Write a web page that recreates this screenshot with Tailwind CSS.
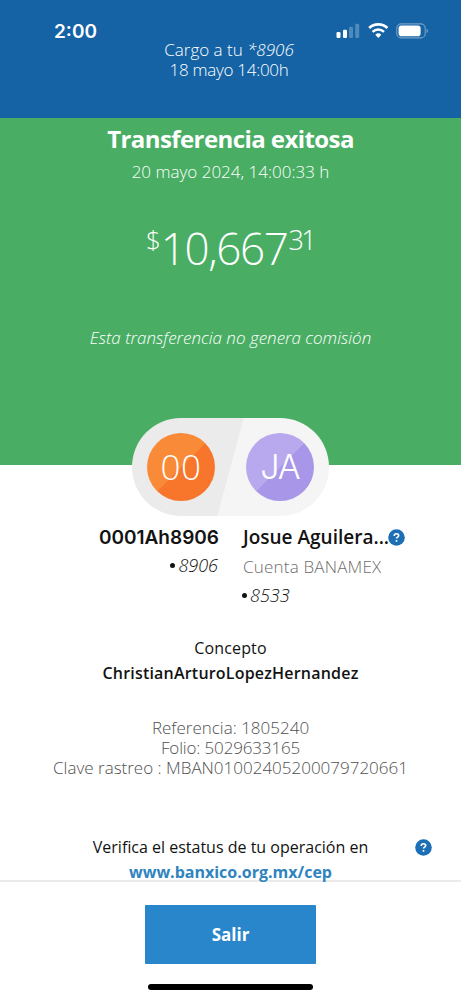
<!DOCTYPE html>
<html lang="es">
<head>
<meta charset="utf-8">
<meta name="viewport" content="width=device-width, initial-scale=1">
<title>Transferencia exitosa</title>
<script src="https://cdn.jsdelivr.net/npm/@tailwindcss/browser@4"></script>
</head>
<body class="bg-white">
<div class="flex h-[1000px] w-[461px] flex-col overflow-hidden bg-white font-['Open_Sans',sans-serif] text-[17px] leading-5 text-[#121212]">

  <!-- Status bar and charge notice -->
  <header class="h-[118px] shrink-0 bg-[#1563a5] text-white">
    <div class="flex h-[40px] items-start justify-between pr-[31px] pl-[54px] pt-[22px]">
      <span class="font-['Inter',sans-serif] text-[19px] leading-[19px] font-semibold">2:00</span>
      <svg class="h-[18px] w-[94px]" viewBox="0 0 94 18" fill="none">
        <g fill="#fff">
          <rect x="0.5" y="10" width="4" height="6" rx="1.2"/>
          <rect x="7" y="7.8" width="4" height="8.2" rx="1.2"/>
          <g fill-opacity=".25">
            <rect x="13" y="4.8" width="4" height="11.2" rx="1.2"/>
            <rect x="19.2" y="1.8" width="4" height="14.2" rx="1.2"/>
          </g>
        </g>
        <path d="M33.2 6a13 13 0 0 1 18.2 0" stroke="#fff" stroke-width="2.7"/>
        <path d="M36.6 9.8a8.2 8.2 0 0 1 11.4 0" stroke="#fff" stroke-width="2.5"/>
        <path d="M39.3 12.7a4.4 4.4 0 0 1 6 0l-3 3.2z" fill="#fff"/>
        <rect x="60.8" y="1.9" width="28.4" height="14" rx="4.4" stroke="#fff" stroke-opacity=".4" stroke-width="1.1"/>
        <rect x="62.6" y="3.6" width="22" height="10.6" rx="2.8" fill="#fff"/>
        <path d="M90.6 6.7c1.7.5 1.7 3.9 0 4.4z" fill="#fff" fill-opacity=".45"/>
      </svg>
    </div>
    <p class="pr-[3px] text-center font-light">Cargo a tu <i>*8906</i></p>
    <p class="pr-[3px] text-center font-light tracking-[-0.28px]">18 mayo 14:00h</p>
  </header>

  <!-- Result and amount -->
  <section class="flex h-[347px] shrink-0 flex-col items-center bg-[#49ae64] text-center text-white">
    <h1 class="mt-[5px] text-[24px] leading-[32px] font-bold tracking-[-0.58px]">Transferencia exitosa</h1>
    <p class="mt-[7px] font-light">20 mayo 2024, 14:00:33 h</p>
    <div class="mt-[42px] flex items-start pr-px font-light">
      <span class="pt-px text-[26px] leading-[28px]">$</span>
      <span class="text-[44px] leading-[48px] tracking-[-1.4px]">10,667</span>
      <span class="pl-px pt-[2px] text-[27px] leading-[28px] tracking-[-2.6px]">31</span>
    </div>
    <p class="mt-[56px] font-light italic">Esta transferencia no genera comisión</p>
    <!-- Sender and recipient avatars -->
    <div class="mt-[70px] flex h-[98px] w-[197px] shrink-0 items-center justify-between rounded-full bg-[linear-gradient(105deg,#ebebeb_49.8%,#f5f5f5_50.2%)] px-[15px] font-light">
      <span class="flex size-[68px] items-center justify-center rounded-full bg-[linear-gradient(135deg,#f98b38_50%,#f7762c_50.5%)] text-[35px] tracking-[0.5px]">00</span>
      <span class="flex size-[68px] items-center justify-center rounded-full bg-[linear-gradient(135deg,#b8a9ee_50%,#a896e9_50.5%)] font-['Inter',sans-serif] text-[34px] tracking-[-1px]">JA</span>
    </div>
  </section>

  <!-- Accounts -->
  <section class="flex h-[172px] shrink-0 gap-[24px] pt-[61px]">
    <div class="w-[219px] text-right">
      <h2 class="pt-px font-['Inter',sans-serif] text-[19px] leading-[22px] font-semibold">0001Ah8906</h2>
      <p class="mt-[6px] flex items-center justify-end gap-[3px] pr-px font-light italic"><span class="size-[5px] rounded-full bg-[#121212]"></span><span class="text-[18px]">8906</span></p>
    </div>
    <div>
      <div class="flex h-[22px] items-center">
        <h2 class="w-[145px] text-[19px] leading-[22px] font-semibold whitespace-nowrap">Josue Aguilera...</h2>
        <svg class="size-[17px]" viewBox="0 0 17 17"><circle cx="8.5" cy="8.5" r="8.3" fill="#1c6fb4"/><path d="M6.2 6.9c0-2.7 4.5-2.7 4.5-.4 0 1.6-2.2 1.5-2.2 3.1M8.5 11v1.7" fill="none" stroke="#fff" stroke-width="1.6"/></svg>
      </div>
      <p class="mt-[9px] font-light tracking-[0.2px] text-[#6e6e6e]">Cuenta BANAMEX</p>
      <p class="mt-[8px] -ml-px flex items-center gap-[3px] font-light italic"><span class="size-[5px] rounded-full bg-[#121212]"></span><span class="text-[18px]">8533</span></p>
    </div>
  </section>

  <!-- Concept and tracking data -->
  <section class="relative h-[243px] shrink-0 pt-px text-center">
    <p class="text-base leading-5 tracking-[0.15px]">Concepto</p>
    <p class="mt-[5px] text-base leading-5 font-semibold tracking-[0.2px]">ChristianArturoLopezHernandez</p>
    <div class="mt-[35px] font-light text-[#505050]">
      <p>Referencia: 1805240</p>
      <p class="tracking-[-0.15px]">Folio: 5029633165</p>
      <p class="whitespace-nowrap">Clave rastreo : MBAN01002405200079720661</p>
    </div>
    <div class="mt-[59px] flex items-start pr-[29px] pl-[92px]">
      <div class="w-[277px]">
        <p class="text-base leading-5 whitespace-nowrap">Verifica el estatus de tu operación en</p>
        <a class="mt-[5px] block text-base leading-5 font-bold text-[#2f84bf]">www.banxico.org.mx/cep</a>
      </div>
      <svg class="mt-[2px] ml-auto size-[17px]" viewBox="0 0 17 17"><circle cx="8.5" cy="8.5" r="8.3" fill="#1c6fb4"/><path d="M6.2 6.9c0-2.7 4.5-2.7 4.5-.4 0 1.6-2.2 1.5-2.2 3.1M8.5 11v1.7" fill="none" stroke="#fff" stroke-width="1.6"/></svg>
    </div>
  </section>

  <!-- Footer -->
  <footer class="flex grow flex-col items-center border-t-2 border-[#ebebeb] bg-white">
    <button class="mt-[23px] h-[59px] w-[171px] rounded-[1px] bg-[#2a86ca] text-[17px] leading-5 font-bold text-white">Salir</button>
    <div class="mt-5 h-[6px] w-[165px] rounded-full bg-black"></div>
  </footer>
</div>
</body>
</html>
